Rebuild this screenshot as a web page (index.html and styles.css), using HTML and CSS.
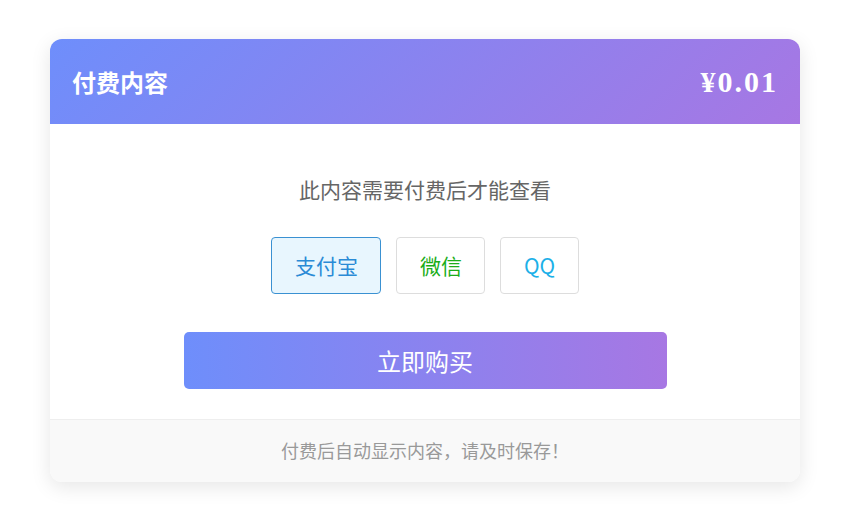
FILE: index.html
```html
<!DOCTYPE html>
<html lang="zh-CN">
<head>
    <meta charset="UTF-8">
    <meta name="viewport" content="width=device-width, initial-scale=1.0">
    <title>付费内容</title>
    <link rel="stylesheet" href="styles.css">
</head>
<body>

<div class="page">
    <div class="pay-card">
        <!-- 头部 -->
        <div class="pay-header">
            <div class="pay-title">付费内容</div>
            <div class="pay-price">¥0.01</div>
        </div>

        <!-- 主体 -->
        <div class="pay-body">
            <p class="pay-tip">此内容需要付费后才能查看</p>
            <div class="methods">
                <div class="method active alipay">支付宝</div>
                <div class="method wechat">微信</div>
                <div class="method qq">QQ</div>
            </div>
            <button class="buy-btn">立即购买</button>
        </div>

        <!-- 底部提示 -->
        <div class="pay-footer">付费后自动显示内容，请及时保存！</div>
    </div>
</div>

</body>
</html>
```

FILE: styles.css
```css
body {
    margin: 0;
    background-color: #fff;
    font-family: "Noto Sans CJK SC", "Noto Sans", sans-serif;
}
.page {
    padding: 39px 50px;
}
.pay-card {
    width: 750px;
    background-color: #fff;
    border-radius: 12px;
    overflow: hidden;
    box-shadow: 0 5px 20px rgba(0, 0, 0, 0.1);
}
.pay-header {
    height: 85px;
    padding: 0 22px;
    display: flex;
    align-items: center;
    justify-content: space-between;
    background: linear-gradient(135deg, #6e8efb, #a777e3);
    color: #fff;
}
.pay-title {
    font-size: 24px;
    font-weight: bold;
}
.pay-price {
    font-family: "Liberation Serif", serif;
    font-size: 30px;
    font-weight: bold;
    letter-spacing: 2px;
}
.pay-body {
    padding: 50px 30px 30px;
    text-align: center;
}
.pay-tip {
    margin: 0 0 33px;
    font-size: 21px;
    line-height: 30px;
    color: #666;
}
.methods {
    display: flex;
    justify-content: center;
    gap: 15px;
}
.method {
    padding: 14px 22.5px;
    font-size: 21px;
    line-height: 27px;
    border: 1px solid #ddd;
    border-radius: 4px;
    background-color: #fff;
    cursor: pointer;
}
.method.active {
    background-color: #e8f6fe;
    border-color: #3a91d2;
}
.alipay {
    color: #2a8bd6;
}
.wechat {
    color: #1aad19;
}
.qq {
    color: #1cb0e8;
}
.buy-btn {
    display: block;
    width: 483px;
    height: 57px;
    margin: 38px auto 0;
    border: none;
    border-radius: 5px;
    background: linear-gradient(90deg, #6e8efb, #a777e3);
    color: #fff;
    font-family: inherit;
    font-size: 24px;
    cursor: pointer;
}
.pay-footer {
    height: 62px;
    line-height: 60px;
    border-top: 1px solid #eee;
    background-color: #f9f9f9;
    text-align: center;
    font-size: 18px;
    color: #999;
}
```
